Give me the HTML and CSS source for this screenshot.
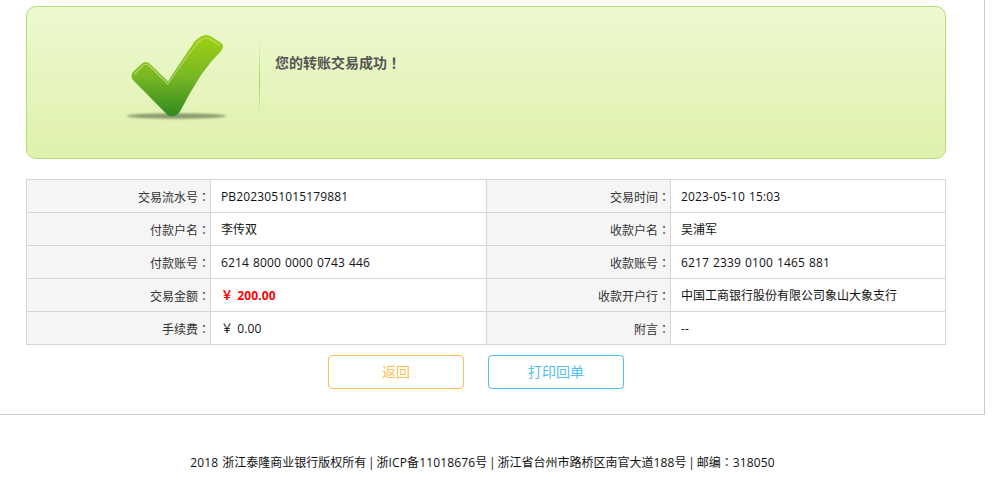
FILE: index.html
```html
<!DOCTYPE html>
<html lang="zh-CN">
<head>
<meta charset="utf-8">
<title>转账交易成功</title>
<link rel="stylesheet" href="styles.css">
</head>
<body>
<main class="sheet">
  <section class="notice">
    <div class="notice-icon">
      <svg class="check" width="120" height="92" viewBox="120 30 120 92" aria-hidden="true">
        <defs>
          <linearGradient id="checkFill" x1="0" y1="0" x2="0" y2="1">
            <stop offset="0" stop-color="#9fd013"/>
            <stop offset="0.5" stop-color="#79b824"/>
            <stop offset="1" stop-color="#2f8a1f"/>
          </linearGradient>
          <filter id="shadowBlur" x="-10%" y="-60%" width="120%" height="220%">
            <feGaussianBlur stdDeviation="1.200"/>
          </filter>
        </defs>
        <ellipse cx="176.500" cy="116" rx="50" ry="2.800" fill="#6d7f52" fill-opacity=".75" filter="url(#shadowBlur)"/>
        <path d="M133 72 L142 63.500 Q146 60.500 149.500 63.500 L168 81.500 Q178 66 195 41 Q204 32 211 36.500 L220.500 42.500 Q225 46 221.500 50.500 Q210 62 201 75 Q190 92 180 111.500 Q175 118.500 168 115.500 L133 80 Q130 76 133 72 Z" fill="url(#checkFill)"/>
        <path d="M134.500 74 L143 65.500 Q146.500 63 149 65.500 L168 84 Q180 66 197 43.500 Q204 36 210 39 L220 45.500" fill="none" stroke="#c3e38a" stroke-opacity=".7" stroke-width="1.200" stroke-linecap="round"/>
      </svg>
    </div>
    <p class="notice-text">您的转账交易成功<span class="tc" lang="zh-TW">！</span></p>
  </section>

  <table class="detail">
    <tbody>
      <tr><th>交易流水号<span class="tc" lang="zh-TW">：</span></th><td class="num">PB2023051015179881</td><th>交易时间<span class="tc" lang="zh-TW">：</span></th><td class="num">2023-05-10 15:03</td></tr>
      <tr><th>付款户名<span class="tc" lang="zh-TW">：</span></th><td>李传双</td><th>收款户名<span class="tc" lang="zh-TW">：</span></th><td>吴浦军</td></tr>
      <tr><th>付款账号<span class="tc" lang="zh-TW">：</span></th><td class="num">6214 8000 0000 0743 446</td><th>收款账号<span class="tc" lang="zh-TW">：</span></th><td class="num">6217 2339 0100 1465 881</td></tr>
      <tr><th>交易金额<span class="tc" lang="zh-TW">：</span></th><td class="num amount">￥ 200.00</td><th>收款开户行<span class="tc" lang="zh-TW">：</span></th><td>中国工商银行股份有限公司象山大象支行</td></tr>
      <tr><th>手续费<span class="tc" lang="zh-TW">：</span></th><td class="num">￥ 0.00</td><th>附言<span class="tc" lang="zh-TW">：</span></th><td class="num">--</td></tr>
    </tbody>
  </table>

  <div class="actions">
    <button class="btn btn-back" type="button">返回</button>
    <button class="btn btn-print" type="button">打印回单</button>
  </div>
</main>
<footer class="footer"><span class="num">2018 </span>浙江泰隆商业银行版权所有<span class="sep"> | </span>浙<span class="num">ICP</span>备<span class="num">11018676</span>号<span class="sep"> | </span>浙江省台州市路桥区南官大道<span class="num">188</span>号<span class="sep"> | </span>邮编<span class="tc" lang="zh-TW">：</span><span class="num">318050</span></footer>
</body>
</html>
```

FILE: styles.css
```css
* { box-sizing: border-box; }
html, body { margin: 0; background: #fff; }
body {
  font-family: "Open Sans", "Noto Sans CJK SC", sans-serif;
  font-size: 12px;
  color: #111;
  overflow: hidden;
}
.tc { font-family: "Noto Sans CJK TC", sans-serif; }
.num { letter-spacing: .14px; word-spacing: .74px; }
.sep { word-spacing: -1.3px; }
.sheet {
  width: 985px;
  height: 415px;
  padding: 6px 38px 0 26px;
  border-right: 1px solid #ccc;
  border-bottom: 1px solid #ccc;
}
.notice {
  display: flex;
  height: 153px;
  border: 1px solid #b6dc74;
  border-radius: 10px;
  background: linear-gradient(#edf9d0, #dff1ad);
}
.notice-icon {
  width: 233px;
  height: 100%;
  display: flex;
  padding: 23px 0 0 93px;
  border-right: 1px solid;
  border-image: linear-gradient(transparent 22%, #a9d261 50%, transparent 72%) 1;
}
.check { display: block; flex: none; }
.notice-text {
  margin: 45px 0 0 15px;
  font-size: 14px;
  line-height: 20px;
  font-weight: 700;
  color: #555;
}
.detail {
  width: 919px;
  margin-top: 20px;
  border-collapse: collapse;
  table-layout: fixed;
}
.detail th, .detail td {
  height: 33px;
  padding: 2px 10px 0;
  border: 1px solid #d6d6d6;
  font-weight: 400;
  line-height: 16px;
}
.detail th {
  width: 184px;
  padding-right: 0;
  text-align: right;
  color: #333;
  background: #f5f5f5;
}
.detail td { width: 276px; color: #111; }
.detail td:last-child { width: 275px; }
.detail .amount { color: #f00; font-weight: 700; }
.actions {
  display: flex;
  justify-content: center;
  gap: 24px;
  margin-top: 10px;
  padding-right: 20px;
}
.btn {
  width: 136px;
  height: 34px;
  padding: 0 0 2px;
  border: 1px solid;
  border-radius: 4px;
  background: #fff;
  font: 14px "Noto Sans CJK SC", sans-serif;
}
.btn-back { color: #fdbd52; border-color: #fdbd52; }
.btn-print { color: #4fc0ef; border-color: #4fc0ef; }
.footer {
  width: 965px;
  margin-top: 39px;
  text-align: center;
  line-height: 16px;
  color: #111;
}
```
